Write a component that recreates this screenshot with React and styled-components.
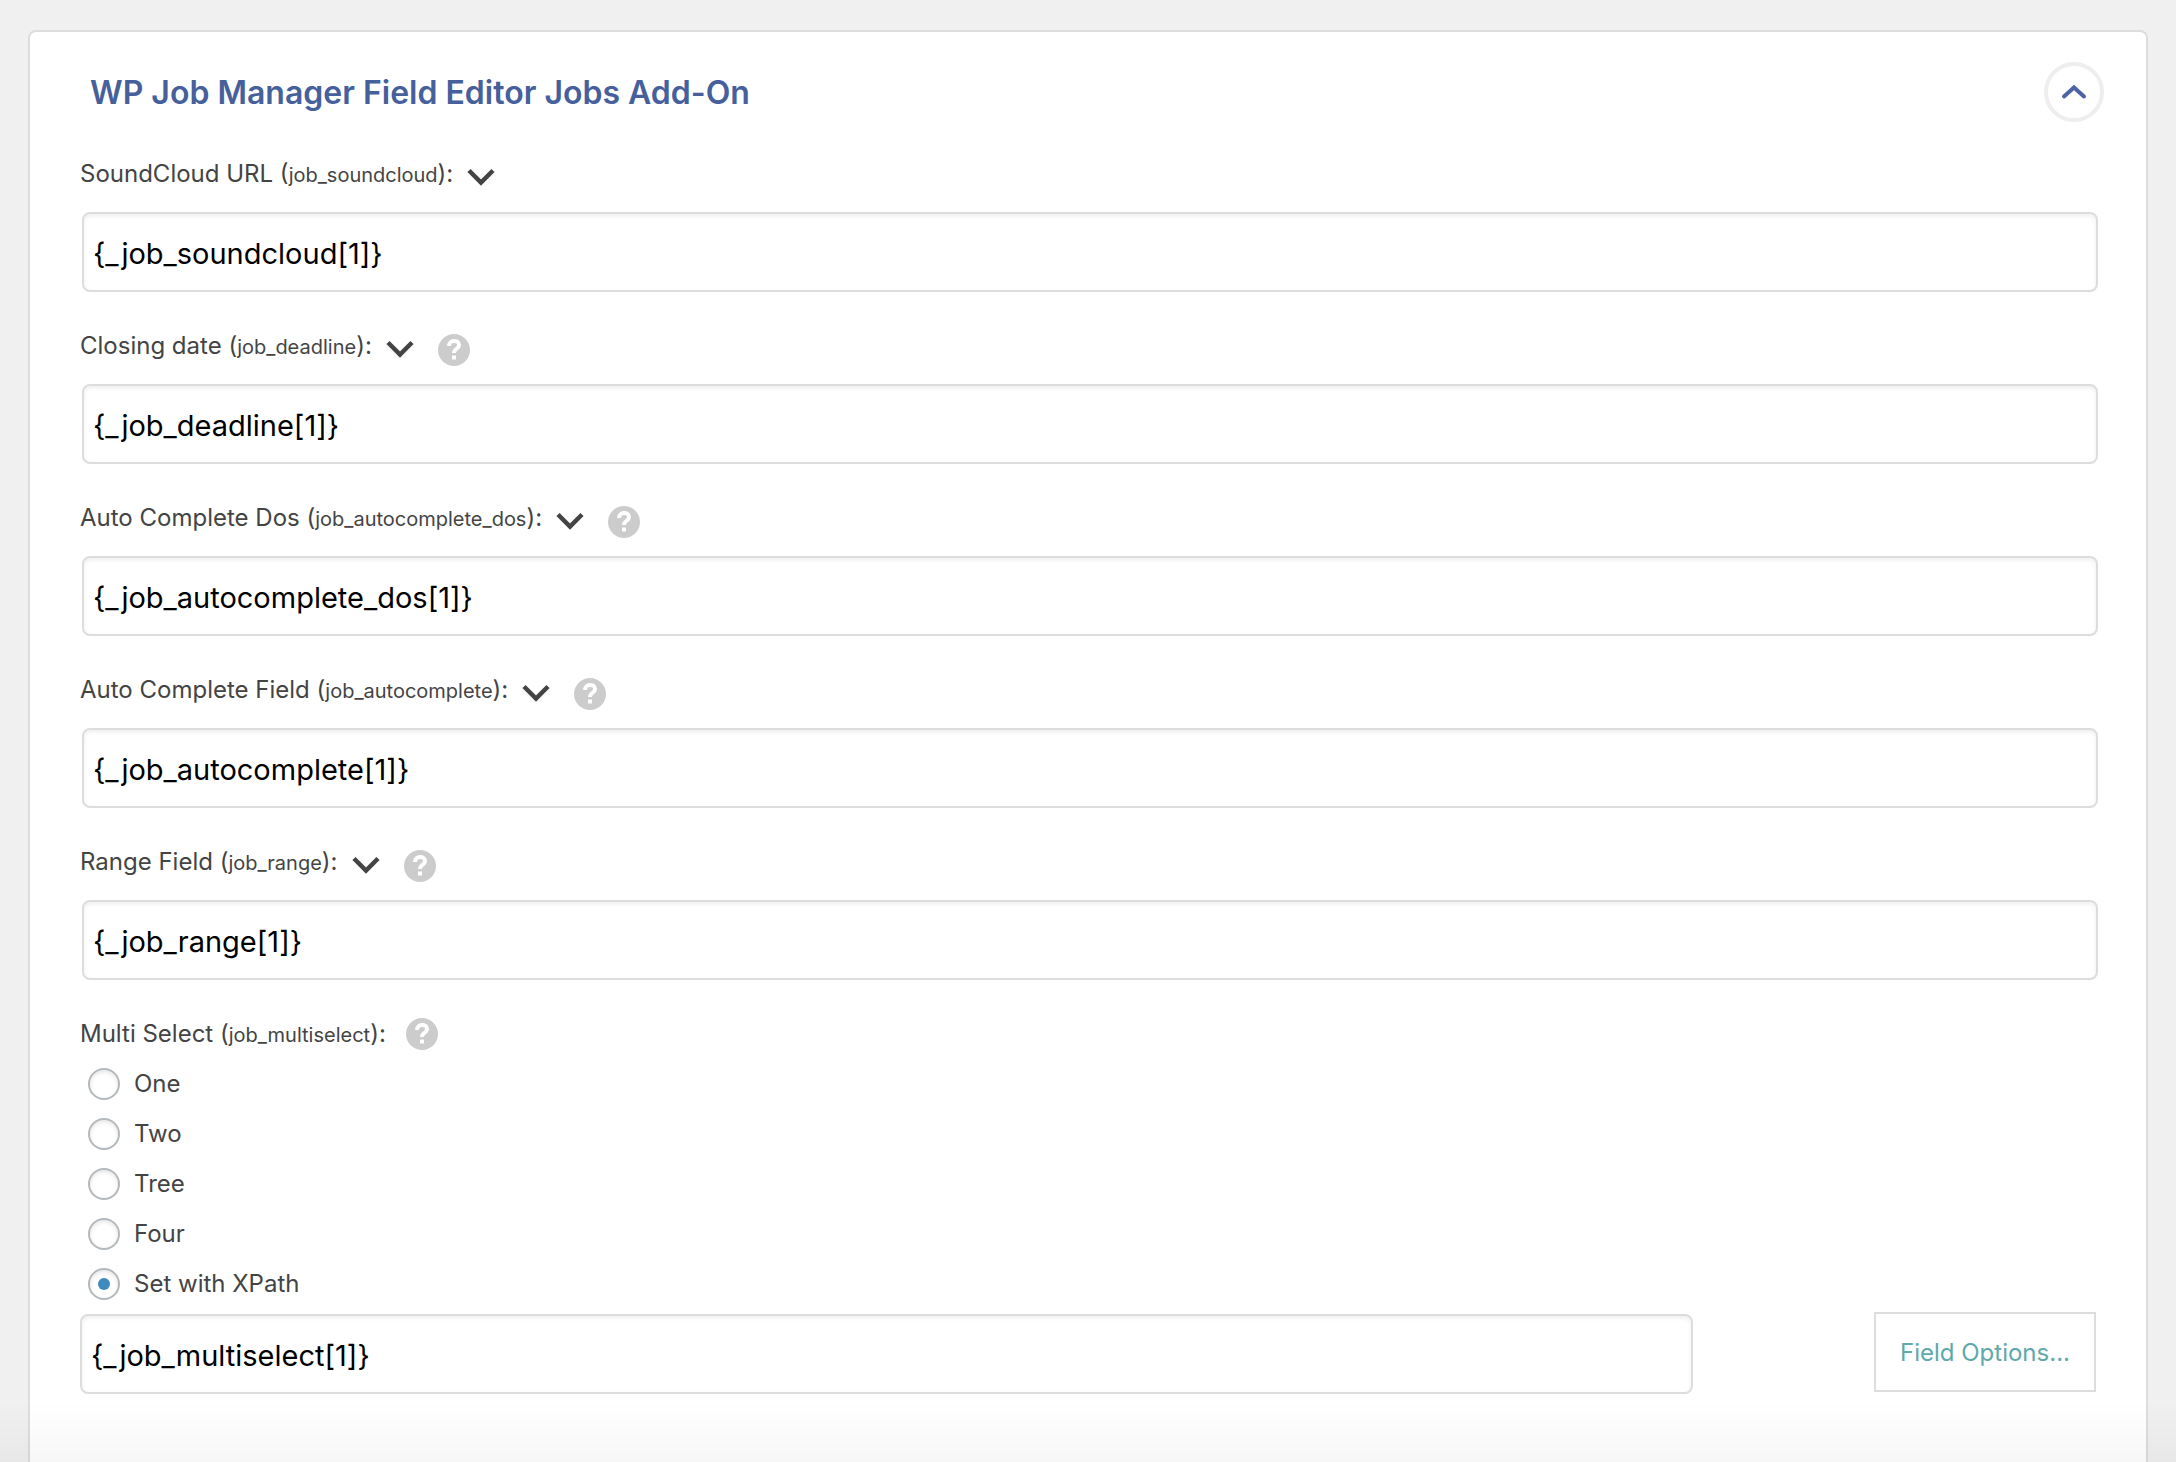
import React, { useState } from 'react';
import styled, { createGlobalStyle } from 'styled-components';

const GlobalStyle = createGlobalStyle`
  body {
    margin: 0;
    background-color: #f0f0f0;
    color: #444;
    font-family: Inter, "Liberation Sans", sans-serif;
    font-size: 24px;
    line-height: 34px;
  }

  * {
    box-sizing: border-box;
  }
`;

const Page = styled.div`
  min-height: 100vh;
  padding: 30px 28px 0;
  display: flex;
`;

const Card = styled.section`
  flex: 1;
  background-color: white;
  border: 2px solid #ddd;
  border-bottom: none;
  border-radius: 8px 8px 0 0;
  padding: 30px 48px 66px 50px;
`;

const Fade = styled.div`
  position: fixed;
  left: 0;
  right: 0;
  bottom: 0;
  height: 60px;
  background: linear-gradient(rgba(0, 0, 0, 0), rgba(0, 0, 0, 0.03));
  pointer-events: none;
`;

const Header = styled.header`
  display: flex;
  justify-content: space-between;
  align-items: center;
  padding-left: 10px;
  margin: 0 -6px 30px 0;
`;

const Title = styled.h2`
  margin: 0;
  padding-top: 2px;
  font-size: 32px;
  font-weight: 600;
  line-height: 40px;
  color: #46609c;
`;

const ToggleButton = styled.button`
  display: flex;
  align-items: center;
  justify-content: center;
  width: 60px;
  height: 60px;
  padding: 0;
  border: 4px solid #eee;
  border-radius: 50%;
  background-color: white;
  color: #4c64a4;
  cursor: pointer;
`;

const Field = styled.div`
  margin-bottom: 32px;
`;

const LabelRow = styled.div`
  display: flex;
  align-items: center;
  height: 44px;
  margin-bottom: ${({ $compact }) => ($compact ? '3px' : '16px')};
`;

const Label = styled.label`
  font-size: 24px;
`;

const Slug = styled.span`
  font-size: 20px;
`;

const IconButton = styled.button`
  display: flex;
  margin: 6px 0 0 14px;
  padding: 0;
  border: none;
  background: none;
  color: #444;
  cursor: pointer;
`;

const HelpButton = styled(IconButton)`
  margin-top: ${({ $raised }) => ($raised ? '0' : '8px')};
  margin-left: ${({ $raised }) => ($raised ? '20px' : '24px')};
  color: #ccc;
`;

const TextInput = styled.input`
  display: block;
  width: 100%;
  height: 80px;
  padding: 2px 9px 0;
  border: 2px solid #ddd;
  border-radius: 8px;
  background-color: white;
  box-shadow: inset 0 2px 4px rgba(0, 0, 0, 0.07);
  color: #000;
  font-family: inherit;
  font-size: 29px;
  outline: none;
`;

const FieldBody = styled.div`
  padding-left: 2px;
`;

const Group = styled.fieldset`
  margin: 0;
  padding: 0;
  border: none;
`;

const RadioRow = styled.label`
  display: flex;
  align-items: center;
  gap: 14px;
  height: 50px;
  padding-left: 8px;
`;

const Radio = styled.input`
  appearance: none;
  display: grid;
  place-content: center;
  width: 32px;
  height: 32px;
  margin: 0;
  border: 2px solid #b4b9be;
  border-radius: 50%;
  background-color: white;
  box-shadow: inset 0 2px 4px rgba(0, 0, 0, 0.1);

  &:checked::before {
    content: '';
    width: 12px;
    height: 12px;
    border-radius: 50%;
    background-color: #3f8abf;
  }
`;

const OptionsRow = styled.div`
  display: flex;
  justify-content: space-between;
  align-items: flex-start;
  margin: 3px 2px 0 0;
`;

const XPathBox = styled.div`
  width: 80%;
  padding-top: 2px;
`;

const OptionsButton = styled.button`
  width: 222px;
  height: 80px;
  padding: 0;
  border: 2px solid #ddd;
  background-color: white;
  color: #5ea9ab;
  font-family: inherit;
  font-size: 24px;
  cursor: pointer;
`;

const ChevronUp = () => (
  <svg width="26" height="16" viewBox="0 0 26 16" fill="none" stroke="currentColor" strokeWidth="4">
    <path d="M3 12.500 13 3.500l10 9" strokeLinecap="round" />
  </svg>
);

const ChevronDown = () => (
  <svg width="28" height="18" viewBox="0 0 28 18" fill="none" stroke="currentColor" strokeWidth="4.500">
    <path d="M2 2.500l12 12 12-12" />
  </svg>
);

const HelpIcon = () => (
  <svg width="32" height="32" viewBox="0 0 32 32">
    <circle cx="16" cy="16" r="16" fill="currentColor" />
    <path d="M11 12c0-6.500 10-6.500 10-1 0 4-5 3.500-5 8" fill="none" stroke="#fff" strokeWidth="4" />
    <path d="M14 21.500h4v4h-4z" fill="#fff" />
  </svg>
);

const fields = [
  { label: 'SoundCloud URL', name: 'job_soundcloud' },
  { label: 'Closing date', name: 'job_deadline', help: true },
  { label: 'Auto Complete Dos', name: 'job_autocomplete_dos', help: true },
  { label: 'Auto Complete Field', name: 'job_autocomplete', help: true },
  { label: 'Range Field', name: 'job_range', help: true },
];

const options = ['One', 'Two', 'Tree', 'Four', 'Set with XPath'];

const TextField = ({ label, name, help }) => {
  const [value, setValue] = useState(`{_${name}[1]}`);

  return (
    <Field>
      <LabelRow>
        <Label htmlFor={name}>
          {label} (<Slug>{name}</Slug>):
        </Label>
        <IconButton type="button" aria-label="Choose element">
          <ChevronDown />
        </IconButton>
        {help && (
          <HelpButton type="button" aria-label="Help">
            <HelpIcon />
          </HelpButton>
        )}
      </LabelRow>
      <FieldBody>
        <TextInput id={name} type="text" value={value} onChange={(e) => setValue(e.target.value)} />
      </FieldBody>
    </Field>
  );
};

const App = () => {
  const [open, setOpen] = useState(true);
  const [selected, setSelected] = useState('Set with XPath');
  const [xpath, setXpath] = useState('{_job_multiselect[1]}');

  return (
    <>
      <GlobalStyle />
      <Page>
        <Card>
          <Header>
            <Title>WP Job Manager Field Editor Jobs Add-On</Title>
            <ToggleButton type="button" aria-label="Toggle section" onClick={() => setOpen(!open)}>
              <ChevronUp />
            </ToggleButton>
          </Header>

          {open && (
            <>
              {fields.map((field) => (
                <TextField key={field.name} {...field} />
              ))}

              <Group aria-labelledby="multiselect-label">
                <LabelRow $compact>
                  <Label as="span" id="multiselect-label">
                    Multi Select (<Slug>job_multiselect</Slug>):
                  </Label>
                  <HelpButton type="button" aria-label="Help" $raised>
                    <HelpIcon />
                  </HelpButton>
                </LabelRow>
                {options.map((option) => (
                  <RadioRow key={option}>
                    <Radio
                      type="radio"
                      name="job_multiselect"
                      value={option}
                      checked={selected === option}
                      onChange={() => setSelected(option)}
                    />
                    {option}
                  </RadioRow>
                ))}
                <OptionsRow>
                  <XPathBox>
                    <TextInput
                      type="text"
                      aria-label="Multi Select XPath"
                      value={xpath}
                      onChange={(e) => setXpath(e.target.value)}
                    />
                  </XPathBox>
                  <OptionsButton type="button">Field Options...</OptionsButton>
                </OptionsRow>
              </Group>
            </>
          )}
        </Card>
      </Page>
      <Fade />
    </>
  );
};

export default App;
